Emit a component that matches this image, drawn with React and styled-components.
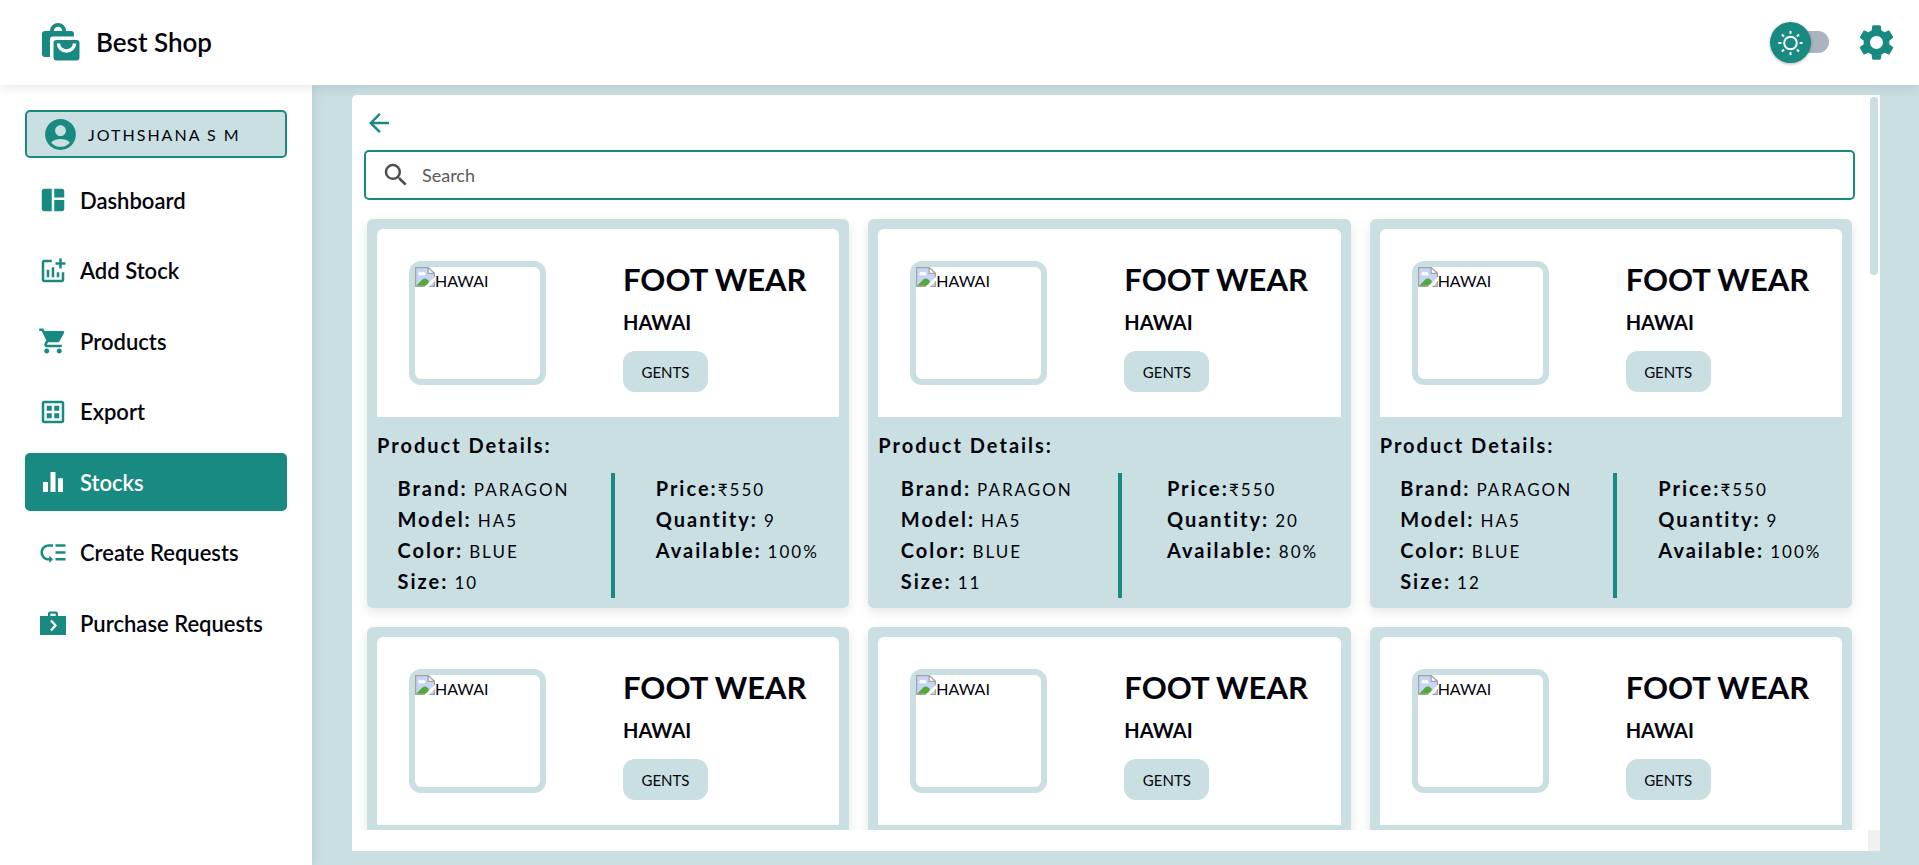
import React, { useState } from "react";
import styled, { createGlobalStyle } from "styled-components";
import {
  MdSpaceDashboard,
  MdOutlineAddchart,
  MdShoppingCart,
  MdOutlineDataset,
  MdEqualizer,
  MdLowPriority,
  MdSettings,
  MdAccountCircle,
  MdArrowBack,
  MdSearch,
} from "react-icons/md";

const teal = "#188a82";
const mist = "#c9dfe1";
const ink = "#03040c";

const GlobalStyle = createGlobalStyle`
  *, *::before, *::after { box-sizing: border-box; }
  body {
    margin: 0;
    font-family: Lato, "Noto Sans", sans-serif;
    color: ${ink};
    background: ${mist};
  }
  h1, h2, h3, p, dl, dt, dd, ul { margin: 0; padding: 0; }
  button, input { font: inherit; color: inherit; }
  svg { display: block; flex: none; }
`;

const Shell = styled.div`
  display: grid;
  grid-template: 85px minmax(0, 1fr) / 312px minmax(0, 1fr);
  height: 100vh;
`;

const TopBar = styled.header`
  grid-column: 1 / -1;
  position: relative;
  z-index: 2;
  display: flex;
  align-items: center;
  padding: 0 21px 1px 42px;
  background: #fff;
  box-shadow: 0 2px 12px rgba(0, 0, 0, 0.1);
`;

const Brand = styled.h1`
  display: flex;
  align-items: center;
  gap: 16px;
  flex: 1;
  font-size: 26px;
  font-weight: 600;
  svg { fill: ${teal}; }
`;

const Toggle = styled.label`
  position: relative;
  display: flex;
  align-items: center;
  width: 59px;
  height: 41px;
  margin-right: 26px;
  cursor: pointer;
`;

const ToggleInput = styled.input`
  position: absolute;
  inset: 0;
  width: 100%;
  height: 100%;
  margin: 0;
  opacity: 0;
`;

const Track = styled.span`
  flex: 1;
  height: 22px;
  margin-left: 16px;
  border-radius: 11px;
  background: #aab4be;
`;

const Knob = styled.span`
  position: absolute;
  left: ${(p) => (p.$on ? "18px" : "0")};
  width: 41px;
  height: 41px;
  border-radius: 50%;
  background: ${teal};
  box-shadow: 0 1px 3px rgba(0, 0, 0, 0.3);
`;

const IconButton = styled.button`
  display: flex;
  padding: 0;
  border: 0;
  background: none;
  color: ${teal};
  cursor: pointer;
`;

const Sidebar = styled.aside`
  position: relative;
  z-index: 1;
  padding: 25px;
  background: #fff;
  box-shadow: 0 0 12px rgba(0, 0, 0, 0.1);
`;

const Profile = styled.div`
  display: flex;
  align-items: center;
  gap: 9px;
  height: 48px;
  padding-left: 15px;
  border: 2px solid ${teal};
  border-radius: 5px;
  background: ${mist};
  font-size: 16px;
  letter-spacing: 2px;
  svg { color: ${teal}; }
`;

const Menu = styled.nav`
  display: flex;
  flex-direction: column;
  justify-content: space-between;
  height: 481px;
  margin-top: 13px;
`;

const MenuLink = styled.a`
  display: flex;
  align-items: center;
  gap: 12px;
  height: 58px;
  padding-left: 13px;
  border-radius: 5px;
  font-size: 22px;
  font-weight: 600;
  text-decoration: none;
  color: ${(p) => (p.$active ? "#fff" : ink)};
  background: ${(p) => (p.$active ? teal : "transparent")};
  svg { color: ${(p) => (p.$active ? "#fff" : teal)}; }
`;

const Main = styled.main`
  padding: 10px 39px 14px 40px;
  min-height: 0;
`;

const Panel = styled.section`
  display: grid;
  grid-template: minmax(0, 1fr) 21px / minmax(0, 1fr) 12px;
  height: 100%;
  border-radius: 5px 0 0 0;
  background: #fff;
`;

const ScrollArea = styled.div`
  overflow: auto;
  scrollbar-width: none;
  padding: 0 13px 0 12px;
`;

const Rail = styled.div`
  padding: 2px;
`;

const Thumb = styled.div`
  height: 178px;
  border-radius: 4px;
  background: ${mist};
`;

const Corner = styled.div`
  grid-column: 2;
  background: #f0f0f0;
`;

const BackRow = styled.div`
  display: flex;
  align-items: center;
  height: 55px;
`;

const SearchBox = styled.label`
  display: flex;
  align-items: center;
  gap: 11px;
  height: 50px;
  padding: 0 15px;
  border: 2px solid ${teal};
  border-radius: 5px;
  color: #4d4d4d;
`;

const SearchInput = styled.input`
  flex: 1;
  min-width: 0;
  padding: 0;
  border: 0;
  outline: 0;
  background: none;
  font-size: 18px;
  &::placeholder { color: #5a5a5a; opacity: 1; }
`;

const Cards = styled.div`
  display: grid;
  grid-template-columns: repeat(3, minmax(0, 1fr));
  gap: 19px;
  padding: 19px 3px;
`;

const Card = styled.article`
  height: 389px;
  padding: 10px;
  border-radius: 6px;
  background: ${mist};
  box-shadow: 0 4px 12px rgba(0, 0, 0, 0.1);
`;

const Summary = styled.div`
  display: grid;
  grid-template-columns: 214px 1fr;
  align-items: center;
  height: 188px;
  padding-left: 32px;
  border-radius: 6px 6px 0 0;
  background: #fff;
`;

const Photo = styled.div`
  display: flex;
  align-items: flex-start;
  width: 137px;
  height: 124px;
  border: 6px solid ${mist};
  border-radius: 12px;
  font-size: 16px;
  line-height: 28px;
`;

const Category = styled.h2`
  font-size: 31px;
  line-height: 50px;
  font-weight: 700;
`;

const ProductName = styled.h3`
  font-size: 20px;
  line-height: 37px;
  font-weight: 700;
`;

const Chip = styled.span`
  display: flex;
  align-items: center;
  justify-content: center;
  width: 85px;
  height: 41px;
  margin-top: 10px;
  border-radius: 12px;
  background: ${mist};
  font-size: 15px;
`;

const DetailsTitle = styled.h3`
  font-size: 20px;
  line-height: 56px;
  font-weight: 700;
  letter-spacing: 2px;
`;

const Details = styled.div`
  display: flex;
  justify-content: space-around;
  height: 125px;
`;

const Divider = styled.div`
  width: 4px;
  background: ${teal};
`;

const Facts = styled.dl`
  letter-spacing: 2px;
  line-height: 31px;
  white-space: nowrap;
`;

const Fact = styled.div`
  display: flex;
  align-items: baseline;
  height: 31px;
  gap: ${(p) => (p.$tight ? "0" : "6px")};
  dt { font-size: 20px; font-weight: 700; }
  dd { font-size: 17px; }
`;

function ShopLogo() {
  return (
    <svg width="38" height="38" viewBox="0 0 38 38" aria-hidden="true">
      <path d="M3 8h5a8 8 0 0 1 16 0h5a3 3 0 0 1 3 3v2.500H11a3 3 0 0 0-3 3V34H3a3 3 0 0 1-3-3V11a3 3 0 0 1 3-3zm8.800 0h8.400a4.200 4.200 0 0 0-8.400 0z" />
      <rect x="11.500" y="17" width="26" height="20.500" rx="3" />
      <path d="M16.500 20.500a8 7.500 0 0 0 16 0" fill="none" stroke="#fff" strokeWidth="3.400" />
    </svg>
  );
}

function Sun() {
  const angles = [0, 45, 90, 135, 180, 225, 270, 315];
  return (
    <svg width="41" height="41" viewBox="0 0 41 41" fill="none" stroke="#fff" strokeWidth="2" aria-hidden="true">
      <circle cx="20.500" cy="21" r="6.300" />
      {angles.map((a) => (
        <path key={a} d="M20.500 8.900v3" transform={`rotate(${a} 20.500 21)`} />
      ))}
    </svg>
  );
}

function PurchaseIcon() {
  return (
    <svg width="30" height="30" viewBox="0 0 30 30" aria-hidden="true">
      <path
        fill="currentColor"
        fillRule="evenodd"
        d="M2 8h8V5.500A2 2 0 0 1 12 3.500h6a2 2 0 0 1 2 2V8h8v19H2zM12.300 8h5.400V5.700h-5.400z"
      />
      <path d="M13 12.500l4.500 5-4.500 5" fill="none" stroke="#fff" strokeWidth="2.200" />
    </svg>
  );
}

function BrokenImage() {
  return (
    <svg width="20" height="20" viewBox="0 0 16 16" aria-hidden="true">
      <path d="M.5 .5h10L15.500 5v10.500H.5z" fill="#c6d5f7" stroke="#a3a3a3" />
      <path d="M10.500 .5V5h5z" fill="#fff" stroke="#a3a3a3" />
      <path d="M3 6.500a1.600 1.600 0 0 1 2.600-2A1.500 1.500 0 0 1 8 6.500z" fill="#fff" />
      <path d="M1 15l5-5.200c1.500-1 3-.8 4.500 .7L12 15z" fill="#57a83a" />
      <path d="M16 7.500L7.500 16H11l5-5z" fill="#fff" />
    </svg>
  );
}

const links = [
  ["Dashboard", MdSpaceDashboard],
  ["Add Stock", MdOutlineAddchart],
  ["Products", MdShoppingCart],
  ["Export", MdOutlineDataset],
  ["Stocks", MdEqualizer],
  ["Create Requests", MdLowPriority],
  ["Purchase Requests", PurchaseIcon],
];

const products = [
  { size: 10, quantity: 9, available: "100%" },
  { size: 11, quantity: 20, available: "80%" },
  { size: 12, quantity: 9, available: "100%" },
  { size: 10, quantity: 9, available: "100%" },
  { size: 11, quantity: 20, available: "80%" },
  { size: 12, quantity: 9, available: "100%" },
];

function ProductCard({ size, quantity, available }) {
  return (
    <Card>
      <Summary>
        <Photo>
          <BrokenImage />
          HAWAI
        </Photo>
        <div>
          <Category>FOOT WEAR</Category>
          <ProductName>HAWAI</ProductName>
          <Chip>GENTS</Chip>
        </div>
      </Summary>
      <DetailsTitle>Product Details:</DetailsTitle>
      <Details>
        <Facts>
          <Fact><dt>Brand:</dt><dd>PARAGON</dd></Fact>
          <Fact><dt>Model:</dt><dd>HA5</dd></Fact>
          <Fact><dt>Color:</dt><dd>BLUE</dd></Fact>
          <Fact><dt>Size:</dt><dd>{size}</dd></Fact>
        </Facts>
        <Divider />
        <Facts>
          <Fact $tight><dt>Price:</dt><dd>₹550</dd></Fact>
          <Fact><dt>Quantity:</dt><dd>{quantity}</dd></Fact>
          <Fact><dt>Available:</dt><dd>{available}</dd></Fact>
        </Facts>
      </Details>
    </Card>
  );
}

export default function App() {
  const [dark, setDark] = useState(false);
  return (
    <Shell>
      <GlobalStyle />
      <TopBar>
        <Brand>
          <ShopLogo />
          Best Shop
        </Brand>
        <Toggle>
          <Track />
          <Knob $on={dark}><Sun /></Knob>
          <ToggleInput
            type="checkbox"
            aria-label="Dark theme"
            checked={dark}
            onChange={(e) => setDark(e.target.checked)}
          />
        </Toggle>
        <IconButton type="button" aria-label="Settings"><MdSettings size={43} /></IconButton>
      </TopBar>
      <Sidebar>
        <Profile>
          <MdAccountCircle size={37} />
          JOTHSHANA S M
        </Profile>
        <Menu>
          {links.map(([label, Icon]) => (
            <MenuLink key={label} href="#" $active={label === "Stocks"}>
              <Icon size={30} />
              {label}
            </MenuLink>
          ))}
        </Menu>
      </Sidebar>
      <Main>
        <Panel>
          <ScrollArea>
            <BackRow>
              <IconButton type="button" aria-label="Back"><MdArrowBack size={30} /></IconButton>
            </BackRow>
            <SearchBox>
              <MdSearch size={30} />
              <SearchInput type="text" placeholder="Search" aria-label="Search" />
            </SearchBox>
            <Cards>
              {products.map((product, i) => (
                <ProductCard key={i} {...product} />
              ))}
            </Cards>
          </ScrollArea>
          <Rail><Thumb /></Rail>
          <Corner />
        </Panel>
      </Main>
    </Shell>
  );
}
